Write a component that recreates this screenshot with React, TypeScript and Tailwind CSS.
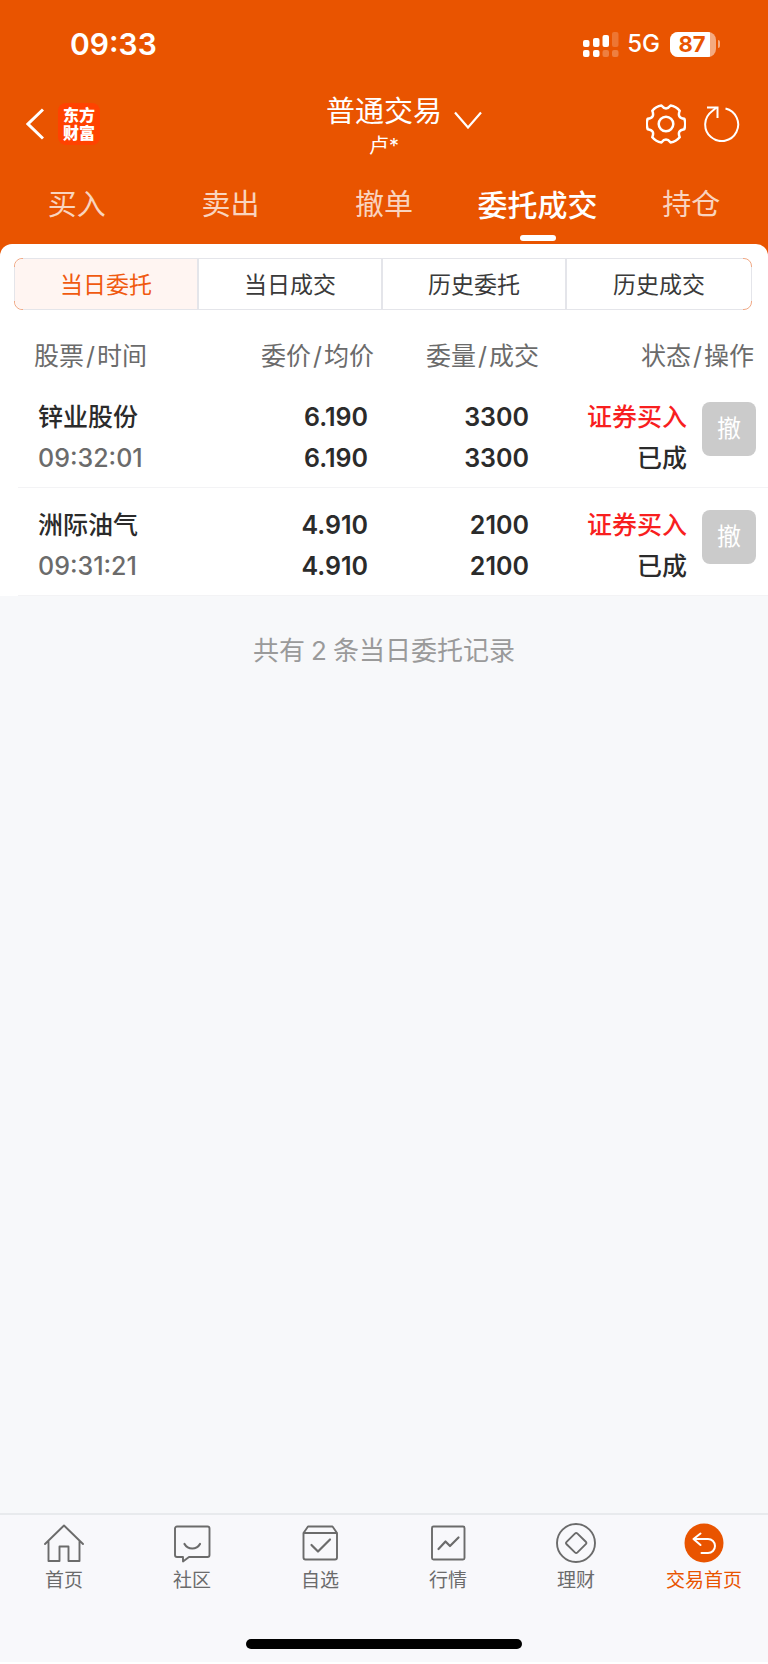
import { useState, type ReactNode } from 'react';
import clsx from 'clsx';

interface Order {
  name: string;
  time: string;
  price: string;
  avgPrice: string;
  amount: string;
  filled: string;
  side: string;
  status: string;
}

const orders: Order[] = [
  {
    name: '锌业股份',
    time: '09:32:01',
    price: '6.190',
    avgPrice: '6.190',
    amount: '3300',
    filled: '3300',
    side: '证券买入',
    status: '已成',
  },
  {
    name: '洲际油气',
    time: '09:31:21',
    price: '4.910',
    avgPrice: '4.910',
    amount: '2100',
    filled: '2100',
    side: '证券买入',
    status: '已成',
  },
];

const tabs = ['买入', '卖出', '撤单', '委托成交', '持仓'];
const filters = ['当日委托', '当日成交', '历史委托', '历史成交'];

function NavIcon({ children }: { children: ReactNode }) {
  return (
    <svg
      viewBox="0 0 40 40"
      className="size-10"
      fill="none"
      stroke="currentColor"
      strokeWidth="1.9"
      strokeLinejoin="round"
      strokeLinecap="round"
      aria-hidden="true"
    >
      {children}
    </svg>
  );
}

const navItems: { label: string; icon: ReactNode }[] = [
  {
    label: '首页',
    icon: (
      <NavIcon>
        <path d="M1 21 20 2.5 39 21M4.5 18v20h11V23.500h9V38h11V18" />
      </NavIcon>
    ),
  },
  {
    label: '社区',
    icon: (
      <NavIcon>
        <path d="M5 3.500h30.500a2 2 0 0 1 2 2v26.500a2 2 0 0 1-2 2H17l-6 4.500V34H5a2 2 0 0 1-2-2V5.500a2 2 0 0 1 2-2Z" />
        <path d="M12.500 21c3.500 6 12 6 15.500 0" strokeWidth="2.200" />
      </NavIcon>
    ),
  },
  {
    label: '自选',
    icon: (
      <NavIcon>
        <path d="M3.500 10 8 3.500h24.500L37 10v24.500a2 2 0 0 1-2 2H5.500a2 2 0 0 1-2-2ZM3.500 10H37" />
        <path d="m11.500 22 6.500 6.500L30 16.500" strokeWidth="2.200" />
      </NavIcon>
    ),
  },
  {
    label: '行情',
    icon: (
      <NavIcon>
        <rect x="4" y="3.500" width="32.500" height="33" rx="1.500" />
        <path d="m10.500 26 7-7.500 4.500 4.500 8.500-8.500" strokeWidth="2.200" />
      </NavIcon>
    ),
  },
  {
    label: '理财',
    icon: (
      <NavIcon>
        <circle cx="20" cy="20" r="19" />
        <path d="M18.900 10.600q1.300-1.200 2.600 0l8.300 8.200q1.200 1.200 0 2.400l-8.300 8.200q-1.300 1.200-2.600 0l-8.300-8.200q-1.200-1.200 0-2.400Z" />
      </NavIcon>
    ),
  },
  {
    label: '交易首页',
    icon: (
      <NavIcon>
        <circle cx="20" cy="20" r="19.500" fill="currentColor" stroke="none" />
        <path d="M16.500 10.500 9.500 16l7 6M9.500 16H24a7 7 0 0 1 0 14h-6.500" stroke="#fff" strokeWidth="2" />
      </NavIcon>
    ),
  },
];

function StatusBar() {
  return (
    <div className="flex h-[88px] items-center justify-between pr-12 pl-[70px]">
      <span className="text-[30px] font-semibold">09:33</span>
      <div className="flex items-center">
        <svg viewBox="0 0 36 25" className="h-[25px] w-9" fill="currentColor" aria-hidden="true">
          <rect x="0" y="8" width="6.500" height="7" rx="2" />
          <rect x="10" y="6" width="6.500" height="9" rx="2" />
          <rect x="19.500" y="3" width="6.500" height="12" rx="2" />
          <rect x="29" y="0" width="6.500" height="15" rx="2" opacity=".2" />
          <rect x="0" y="18" width="6.500" height="7" rx="2" />
          <rect x="10" y="18" width="6.500" height="7" rx="2" />
          <rect x="19.500" y="18" width="6.500" height="7" rx="2" opacity=".25" />
          <rect x="29" y="18" width="6.500" height="7" rx="2" opacity=".25" />
        </svg>
        <span className="ml-2 text-2xl font-medium">5G</span>
        <div className="ml-2.5 flex items-center">
          <div className="flex h-[25px] w-[46px] overflow-hidden rounded-lg bg-white/50">
            <span className="w-10 bg-white pl-1 text-center text-[22px] leading-[25px] font-bold text-[#e95400]">
              87
            </span>
          </div>
          <span className="ml-0.5 h-2 w-0.5 rounded-r-full bg-white/50" />
        </div>
      </div>
    </div>
  );
}

function TitleBar() {
  return (
    <div className="grid h-[72px] grid-cols-[1fr_auto_1fr] items-center">
      <div className="flex items-center pl-[26px]">
        <button type="button" aria-label="返回">
          <svg viewBox="0 0 18 32" className="h-8 w-[18px]" fill="none" stroke="currentColor" strokeWidth="3">
            <path d="M17 1.500 2 16l15 14.500" />
          </svg>
        </button>
        <a
          href="#"
          className="ml-3.5 flex size-[42px] flex-col items-center justify-center rounded-lg bg-[#ff4200] text-base leading-[18px] font-black"
        >
          <span>东方</span>
          <span>财富</span>
        </a>
      </div>

      <button type="button" className="flex flex-col items-center pt-[3px]">
        <span className="flex items-center gap-3 pl-10 text-[29px] leading-10">
          普通交易
          <svg viewBox="0 0 28 18" className="mt-4 h-[18px] w-7" fill="none" stroke="currentColor" strokeWidth="2.200">
            <path d="M1 1.500 14 16.500 27 1.500" />
          </svg>
        </span>
        <span className="text-xl leading-7">卢*</span>
      </button>

      <div className="flex items-center justify-end gap-[18px] pr-7">
        <button type="button" aria-label="设置">
          <svg viewBox="0 0 40 40" className="size-10" fill="none" stroke="currentColor" strokeWidth="2.500" strokeLinejoin="round">
            <path d="M38.300 25.200Q30.800 26.250 33.700 33.200 30.100 37.500 24.600 38.400 20 32.500 15.400 38.400 9.900 37.500 6.300 33.200 9.200 26.250 1.700 25.200-.2 20 1.700 14.800 9.200 13.750 6.300 6.800 9.900 2.500 15.400 1.600 20 7.500 24.600 1.600 30.100 2.500 33.700 6.800 30.800 13.750 38.300 14.800 40.200 20 38.300 25.200Z" />
            <circle cx="20" cy="20" r="7.300" />
          </svg>
        </button>
        <button type="button" aria-label="刷新">
          <svg viewBox="0 0 36 36" className="size-9" fill="none" stroke="currentColor" strokeWidth="2">
            <path d="M21.500 2.500A16.500 16.500 0 1 1 8 5.200L12.500 1.500" />
            <path d="M3 1.500h10.500V12" />
          </svg>
        </button>
      </div>
    </div>
  );
}

function HeadLabel({ first, second }: { first: string; second: string }) {
  return (
    <>
      {first}
      <span className="mx-0.5">/</span>
      {second}
    </>
  );
}

function OrderTable() {
  return (
    <div className="mt-5 pl-[18px]">
      <table className="w-full table-fixed border-collapse text-[25px]">
        <colgroup>
          <col className="w-[24%]" />
          <col className="w-[24%]" />
          <col className="w-[22%]" />
          <col className="w-[20%]" />
          <col className="w-[10%]" />
        </colgroup>
        <thead>
          <tr className="h-[50px] whitespace-nowrap text-[#6b6b6b]">
            <th className="pt-1 pl-4 text-left font-normal">
              <HeadLabel first="股票" second="时间" />
            </th>
            <th className="pt-1 pr-1 text-right font-normal">
              <HeadLabel first="委价" second="均价" />
            </th>
            <th className="pt-1 pr-1 text-right font-normal">
              <HeadLabel first="委量" second="成交" />
            </th>
            <th colSpan={2} className="pt-1 pr-3.5 text-right font-normal">
              <HeadLabel first="状态" second="操作" />
            </th>
          </tr>
        </thead>
        <tbody>
          {orders.map((order) => (
            <tr
              key={order.time}
              className="border-b border-[#f3f3f5] align-top leading-[41px] font-semibold whitespace-nowrap text-[#2b2b2b]"
            >
              <td className="pt-[17px] pb-2 pl-5 font-medium">
                <div>{order.name}</div>
                <div className="text-[#6b6b6b]">{order.time}</div>
              </td>
              <td className="pt-[17px] pr-2.5 text-right">
                <div>{order.price}</div>
                <div>{order.avgPrice}</div>
              </td>
              <td className="pt-[17px] pr-3.5 text-right">
                <div>{order.amount}</div>
                <div>{order.filled}</div>
              </td>
              <td className="pt-[17px] pr-1.5 text-right font-medium">
                <div className="text-[#f81f1f]">{order.side}</div>
                <div>{order.status}</div>
              </td>
              <td className="pt-[22px] pl-[9px]">
                <button
                  type="button"
                  className="flex size-[54px] items-center justify-center rounded-lg bg-[#cbcbcb] text-2xl font-normal text-white"
                >
                  撤
                </button>
              </td>
            </tr>
          ))}
        </tbody>
      </table>
    </div>
  );
}

export default function App() {
  const [activeTab, setActiveTab] = useState('委托成交');
  const [activeFilter, setActiveFilter] = useState('当日委托');
  const [activeNav, setActiveNav] = useState('交易首页');

  return (
    <div className="flex min-h-screen flex-col bg-[#f7f8fa] font-[Inter,'Noto_Sans_CJK_SC',sans-serif]">
      <div className="bg-[#e95400]">
        <header className="text-white">
          <StatusBar />
          <TitleBar />
          <nav className="grid h-[84px] grid-cols-5">
            {tabs.map((tab) => (
              <button
                key={tab}
                type="button"
                onClick={() => setActiveTab(tab)}
                className={clsx(
                  'relative pt-1.5',
                  tab === activeTab ? 'text-[30px] font-medium' : 'text-[29px] text-white/75'
                )}
              >
                {tab}
                {tab === activeTab && (
                  <span className="absolute bottom-[3px] left-1/2 h-1.5 w-9 -translate-x-1/2 rounded-full bg-white" />
                )}
              </button>
            ))}
          </nav>
        </header>

        <section className="rounded-t-xl bg-white pt-3.5">
          <div className="relative mr-4 ml-3.5 rounded-lg border border-[#f0a884]">
            <div className="grid h-[50px] grid-cols-4 divide-x-2 divide-[#e4e5ea]">
              {filters.map((filter) => (
                <button
                  key={filter}
                  type="button"
                  onClick={() => setActiveFilter(filter)}
                  className={clsx(
                    'pt-0.5 text-[23px] first:rounded-l-lg last:rounded-r-lg',
                    filter === activeFilter ? 'bg-[#fff5f2] text-[#f05a10]' : 'text-[#3a3a3a]'
                  )}
                >
                  {filter}
                </button>
              ))}
            </div>
            {/* grey edges, only the corners stay orange */}
            <span className="pointer-events-none absolute inset-x-2 -inset-y-px border-y border-[#e4e5ea]" />
            <span className="pointer-events-none absolute -inset-x-px inset-y-2 border-x border-[#e4e5ea]" />
          </div>
          <OrderTable />
        </section>
      </div>

      <main className="flex-1 pt-[35px] text-center text-[26px] leading-10 text-[#9a9a9a]">
        共有<span className="mx-1.5">2</span>条当日委托记录
      </main>

      <footer className="border-t-2 border-b-2 border-t-[#e8eaed] border-b-white bg-[#f8f8fb]">
        <nav className="grid grid-cols-6 pt-2">
          {navItems.map(({ label, icon }) => (
            <button
              key={label}
              type="button"
              onClick={() => setActiveNav(label)}
              className={clsx(
                'flex flex-col items-center gap-1 text-[19px] leading-7',
                label === activeNav ? 'text-[#e95400]' : 'text-[#6b6b6b]'
              )}
            >
              {icon}
              {label}
            </button>
          ))}
        </nav>
        <div className="mx-auto mt-11 mb-[13px] h-2.5 w-[36%] rounded-full bg-black" />
      </footer>
    </div>
  );
}
